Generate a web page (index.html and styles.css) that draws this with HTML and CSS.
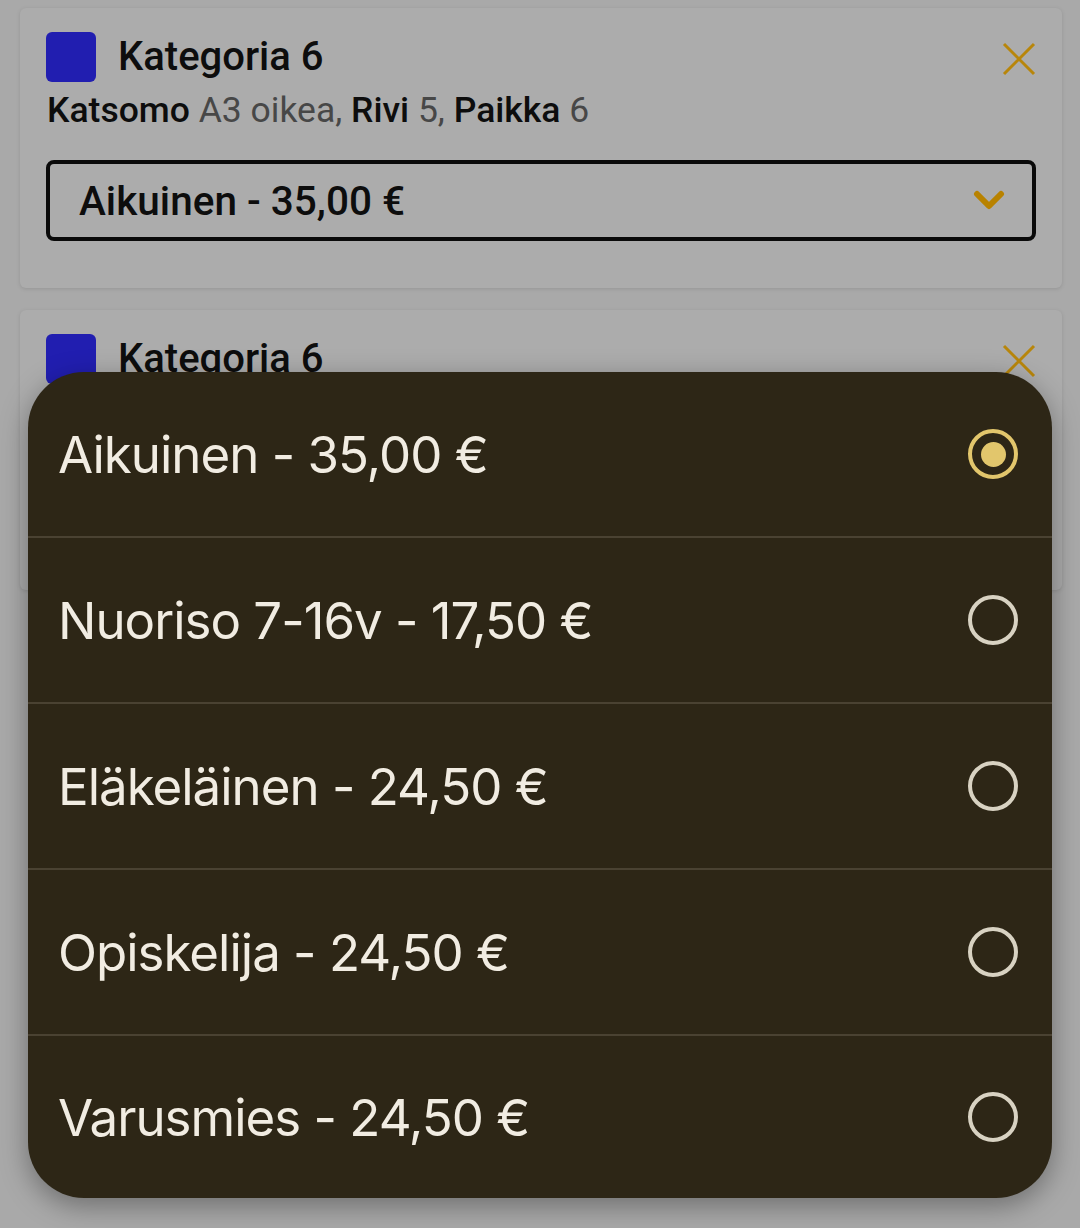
FILE: index.html
```html
<!DOCTYPE html>
<html lang="fi">
<head>
    <meta charset="UTF-8">
    <meta name="viewport" content="width=device-width, initial-scale=1.0">
    <title>Liput</title>
    <link rel="stylesheet" href="styles.css">
</head>
<body>
    <div class="tickets">
        <div class="ticket">
            <div class="ticket-head">
                <span class="swatch"></span>
                <h2>Kategoria 6</h2>
                <button class="remove" aria-label="Poista">
                    <svg width="34" height="34" viewBox="0 0 34 34"><path d="M2 2 L32 32 M32 2 L2 32" stroke="currentColor" stroke-width="3" fill="none"/></svg>
                </button>
            </div>
            <p class="seat"><b>Katsomo</b> A3 oikea, <b>Rivi</b> 5, <b>Paikka</b> 6</p>
            <div class="select">
                <span>Aikuinen - 35,00 €</span>
                <svg class="chevron" width="32" height="22" viewBox="0 0 32 22"><path d="M4 4 L16 16 L28 4" stroke="currentColor" stroke-width="6" stroke-linecap="round" stroke-linejoin="round" fill="none"/></svg>
            </div>
        </div>
        <div class="ticket">
            <div class="ticket-head">
                <span class="swatch"></span>
                <h2>Kategoria 6</h2>
                <button class="remove" aria-label="Poista">
                    <svg width="34" height="34" viewBox="0 0 34 34"><path d="M2 2 L32 32 M32 2 L2 32" stroke="currentColor" stroke-width="3" fill="none"/></svg>
                </button>
            </div>
            <p class="seat"><b>Katsomo</b> A3 oikea, <b>Rivi</b> 5, <b>Paikka</b> 7</p>
            <div class="select">
                <span>Aikuinen - 35,00 €</span>
                <svg class="chevron" width="32" height="22" viewBox="0 0 32 22"><path d="M4 4 L16 16 L28 4" stroke="currentColor" stroke-width="6" stroke-linecap="round" stroke-linejoin="round" fill="none"/></svg>
            </div>
        </div>
    </div>

    <ul class="sheet">
        <li class="option selected"><span>Aikuinen - 35,00 €</span><i class="radio"></i></li>
        <li class="option"><span>Nuoriso 7-16v - 17,50 €</span><i class="radio"></i></li>
        <li class="option"><span>Eläkeläinen - 24,50 €</span><i class="radio"></i></li>
        <li class="option"><span>Opiskelija - 24,50 €</span><i class="radio"></i></li>
        <li class="option"><span>Varusmies - 24,50 €</span><i class="radio"></i></li>
    </ul>
</body>
</html>
```
FILE: styles.css
```css
body {
    margin: 0;
    padding: 0;
    background-color: #a9a9a9;
    font-family: Roboto, "Liberation Sans", sans-serif;
    color: #0d0d0d;
    height: 1228px;
    overflow: hidden;
}
.tickets {
    display: flex;
    flex-direction: column;
    gap: 22px;
    padding: 8px 18px 0 20px;
}
.ticket {
    background-color: #acacac;
    border-radius: 6px;
    box-shadow: 0 1px 4px rgba(0, 0, 0, 0.12);
    padding: 24px 26px 46px 26px;
    height: 210px;
}
.ticket-head {
    display: flex;
    align-items: center;
    height: 50px;
}
.swatch {
    width: 50px;
    height: 50px;
    border-radius: 6px;
    background-color: #211eb0;
    flex-shrink: 0;
}
h2 {
    margin: 0 0 0 22px;
    font-size: 40px;
    font-weight: 500;
    flex: 1;
    position: relative;
    top: -1px;
}
.remove {
    border: none;
    background: none;
    padding: 0;
    color: #b8860b;
    display: flex;
    position: relative;
    top: 2px;
}
.seat {
    margin: 8px 0 0 1px;
    font-size: 35.5px;
    color: #474747;
    line-height: 40px;
}
.seat b {
    font-weight: 500;
    color: #0d0d0d;
}
.select {
    margin-top: 30px;
    height: 73px;
    border: 4px solid #0a0a0a;
    border-radius: 8px;
    display: flex;
    align-items: center;
    justify-content: space-between;
    padding: 0 27px 0 29px;
    font-size: 40.5px;
    font-weight: 500;
}
.chevron {
    color: #b88200;
}
.sheet {
    position: absolute;
    left: 28px;
    top: 372px;
    width: 1024px;
    margin: 0;
    padding: 0;
    list-style: none;
    background-color: #2d2616;
    border-radius: 56px;
    box-shadow: 0 8px 28px rgba(0, 0, 0, 0.35);
    overflow: hidden;
    font-family: Inter, "Noto Sans", sans-serif;
}
.option {
    height: 164px;
    display: flex;
    align-items: center;
    justify-content: space-between;
    padding: 0 34px 0 30px;
    color: #f1ece2;
    font-size: 51px;
    letter-spacing: -1px;
    border-top: 2px solid #4a4232;
}
.option:first-child {
    border-top: none;
}
.option:last-child {
    height: 162px;
}
.radio {
    width: 42px;
    height: 42px;
    border: 4px solid #d8d2c2;
    border-radius: 50%;
    box-sizing: content-box;
    display: flex;
    align-items: center;
    justify-content: center;
}
.selected .radio {
    border-color: #e2c66c;
}
.selected .radio::after {
    content: "";
    width: 25px;
    height: 25px;
    border-radius: 50%;
    background-color: #e2c66c;
}
```
